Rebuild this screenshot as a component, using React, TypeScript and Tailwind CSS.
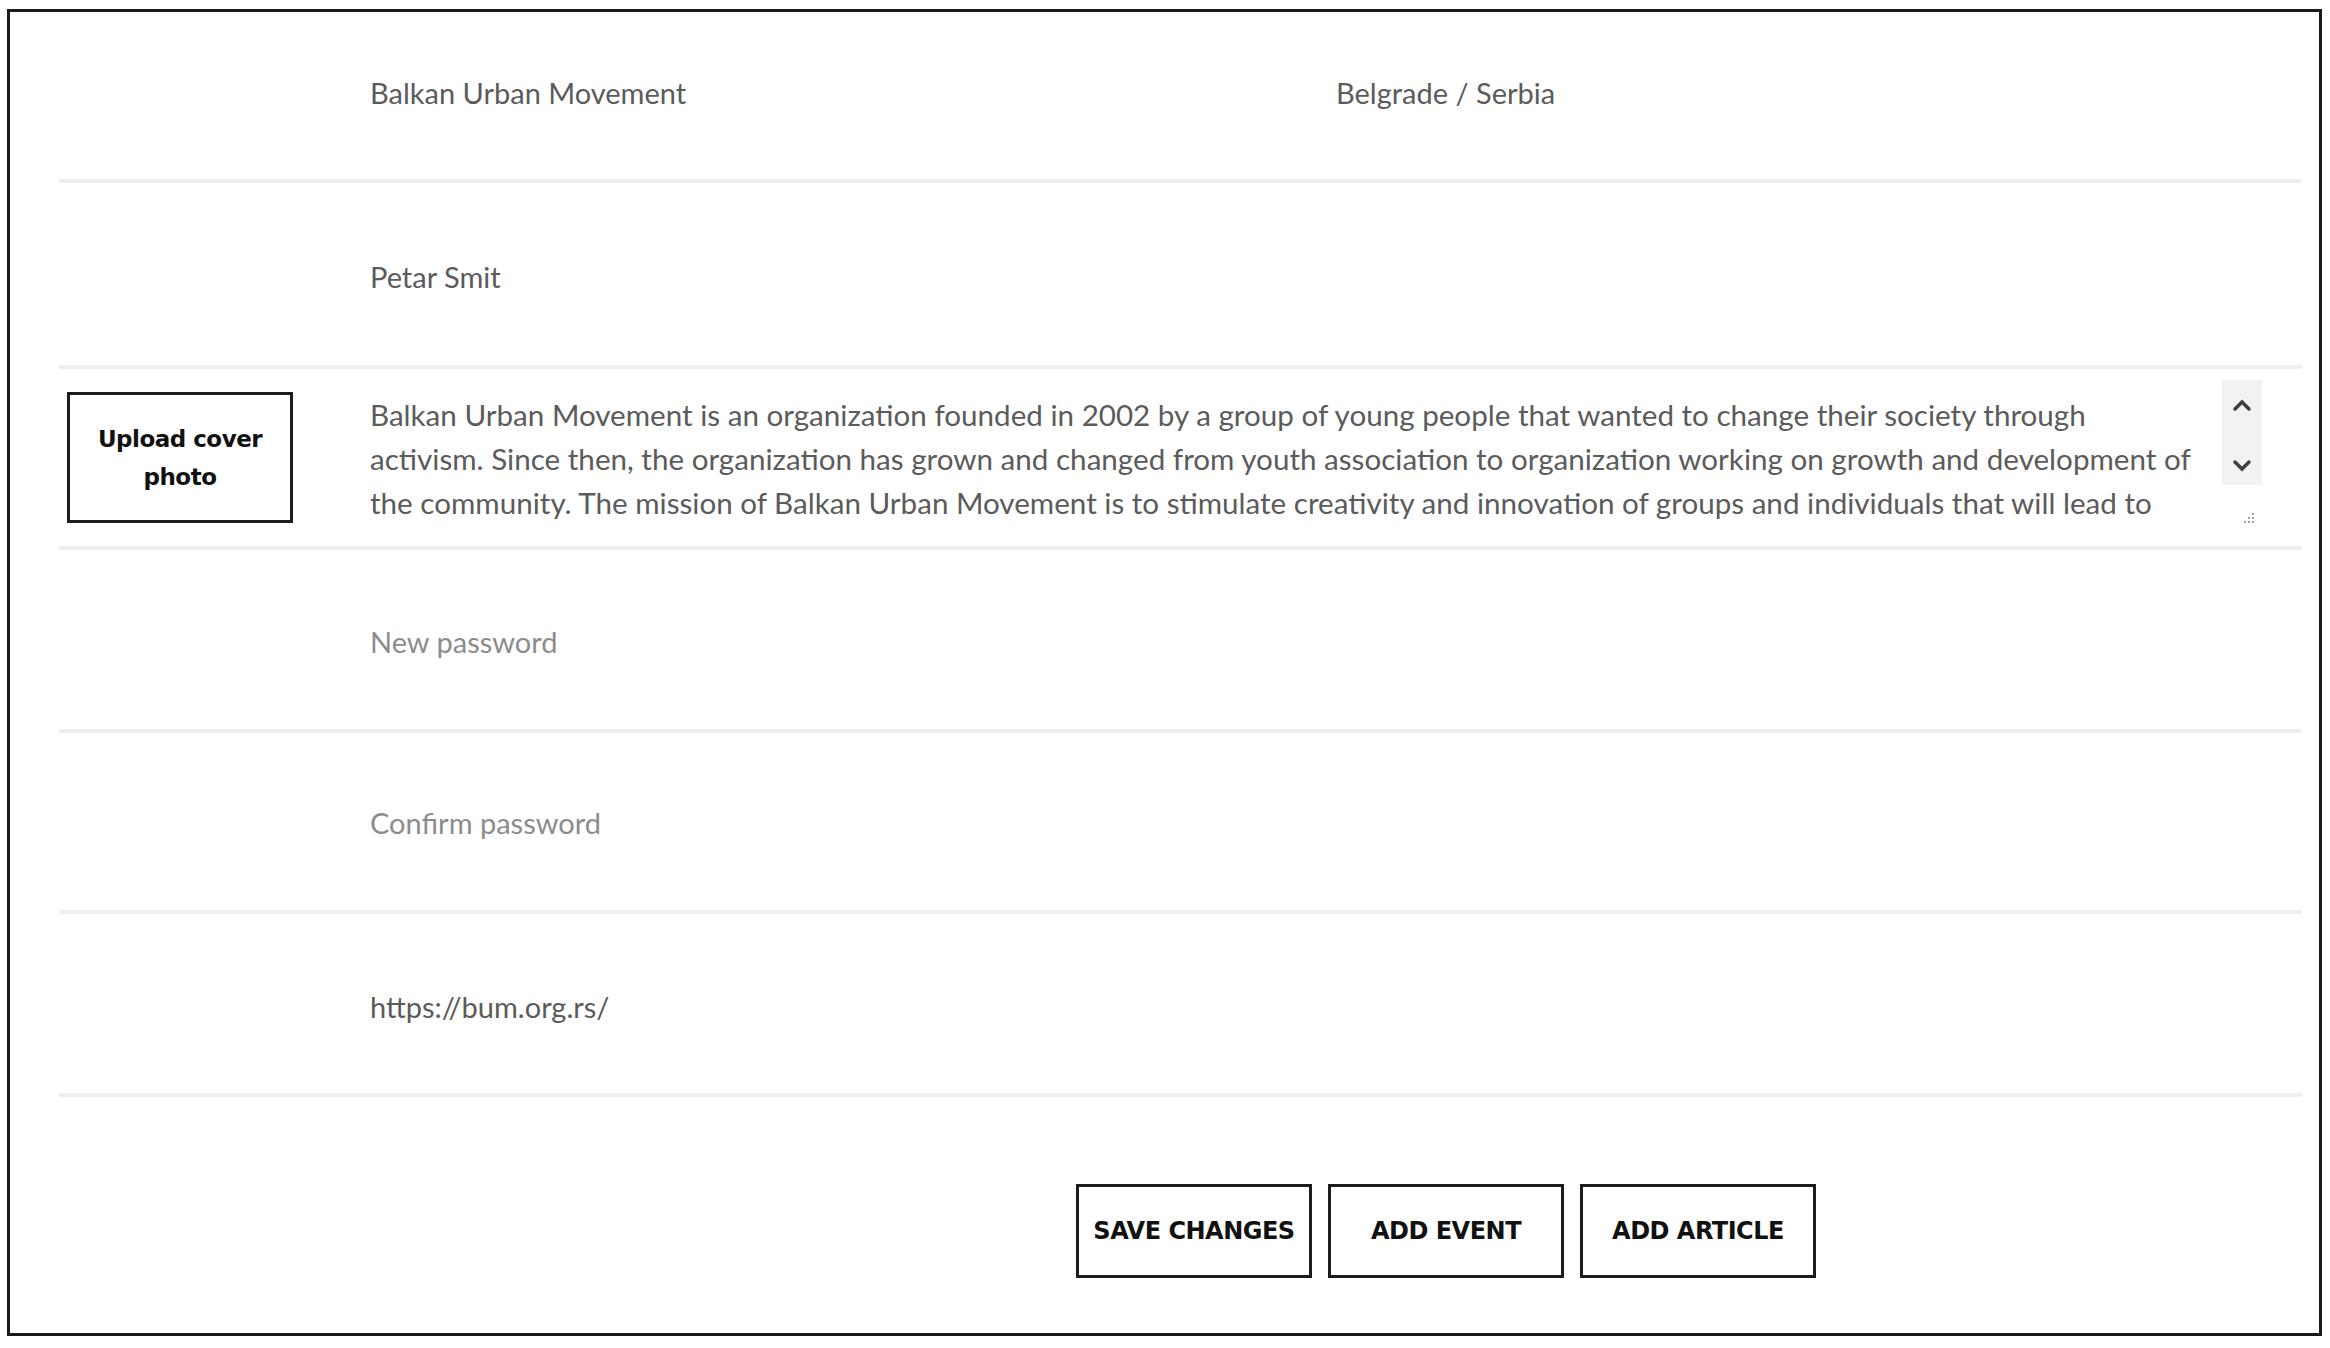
import React from "react";

const fieldText = "text-[29px] text-[#5b5b5b] [font-family:Lato,'Liberation_Sans',sans-serif]";
const placeholder = "text-[29px] text-[#8c8c8c] [font-family:Lato,'Liberation_Sans',sans-serif]";
const boldFont = "[font-family:'DejaVu_Sans',sans-serif] font-bold text-[#111]";

const description = [
  "Balkan Urban Movement is an organization founded in 2002 by a group of young people that wanted to change their society through",
  "activism. Since then, the organization has grown and changed from youth association to organization working on growth and development of",
  "the community. The mission of Balkan Urban Movement is to stimulate creativity and innovation of groups and individuals that will lead to",
];

const Row = ({ h, left, children }: { h: string; left?: React.ReactNode; children: React.ReactNode }) => (
  <div className={`flex items-center border-b-[4px] border-[#eeeeee] ${h}`}>
    <div className="w-[311px] shrink-0 pl-2">{left}</div>
    <div className="flex-1 flex items-center min-w-0 self-stretch">{children}</div>
  </div>
);

const ActionButton = ({ label }: { label: string }) => (
  <button className={`w-[236px] h-[94px] border-[3px] border-[#1c1c1c] bg-white text-[24px] tracking-[-0.5px] ${boldFont}`}>
    {label}
  </button>
);

export default function App() {
  return (
    <div className="bg-white w-[2330px] h-[1348px] pt-[9px] pl-[7px]">
      <div className="w-[2315px] h-[1327px] border-[3px] border-[#1a1a1a] pl-[49px] pr-[17px] flex flex-col">
        <Row h="h-[171px]">
          <span className={`${fieldText} w-[966px] pb-[5px]`}>Balkan Urban Movement</span>
          <span className={`${fieldText} pb-[5px]`}>Belgrade / Serbia</span>
        </Row>
        <Row h="h-[186px]">
          <span className={`${fieldText} pt-[6px]`}>Petar Smit</span>
        </Row>
        <Row
          h="h-[181px]"
          left={
            <button className={`w-[226px] h-[131px] border-[3px] border-[#1c1c1c] bg-white text-[23px] leading-[38px] tracking-[-0.5px] ${boldFont}`}>
              Upload cover
              <br />
              photo
            </button>
          }
        >
          <div className="flex-1 pt-[3px] text-[29.6px] leading-[44px] text-[#5b5b5b] [font-family:Lato,'Liberation_Sans',sans-serif] whitespace-nowrap">
            {description.map((line) => (
              <div key={line}>{line}</div>
            ))}
          </div>
          <div className="w-[80px] shrink-0 self-stretch flex flex-col items-start pt-[11px]">
            <div className="w-[40px] h-[105px] bg-[#f2f2f2] flex flex-col items-center justify-between pt-[19px] pb-[13px]">
              <svg width="20" height="13" viewBox="0 0 20 13" fill="none" stroke="#3e3e3e" strokeWidth="3.5" strokeLinecap="round">
                <path d="M3 10 L10 3 L17 10" />
              </svg>
              <svg width="20" height="13" viewBox="0 0 20 13" fill="none" stroke="#3e3e3e" strokeWidth="3.5" strokeLinecap="round">
                <path d="M3 3 L10 10 L17 3" />
              </svg>
            </div>
            <svg className="mt-[28px] ml-[20px]" width="14" height="12" viewBox="0 0 14 12" fill="#a0a0a0">
              <rect x="10" y="0" width="2" height="2" />
              <rect x="6" y="4" width="2" height="2" />
              <rect x="10" y="4" width="2" height="2" />
              <rect x="2" y="8" width="2" height="2" />
              <rect x="6" y="8" width="2" height="2" />
              <rect x="10" y="8" width="2" height="2" />
            </svg>
          </div>
        </Row>
        <Row h="h-[183px]">
          <span className={`${placeholder} pt-[4px]`}>New password</span>
        </Row>
        <Row h="h-[181px]">
          <span className={`${placeholder} pt-[3px]`}>Confirm password</span>
        </Row>
        <Row h="h-[183px]">
          <span className={`${fieldText} pt-[6px]`}>https://bum.org.rs/</span>
        </Row>
        <div className="flex gap-[16px] pl-[1017px] pt-[87px]">
          <ActionButton label="SAVE CHANGES" />
          <ActionButton label="ADD EVENT" />
          <ActionButton label="ADD ARTICLE" />
        </div>
      </div>
    </div>
  );
}
